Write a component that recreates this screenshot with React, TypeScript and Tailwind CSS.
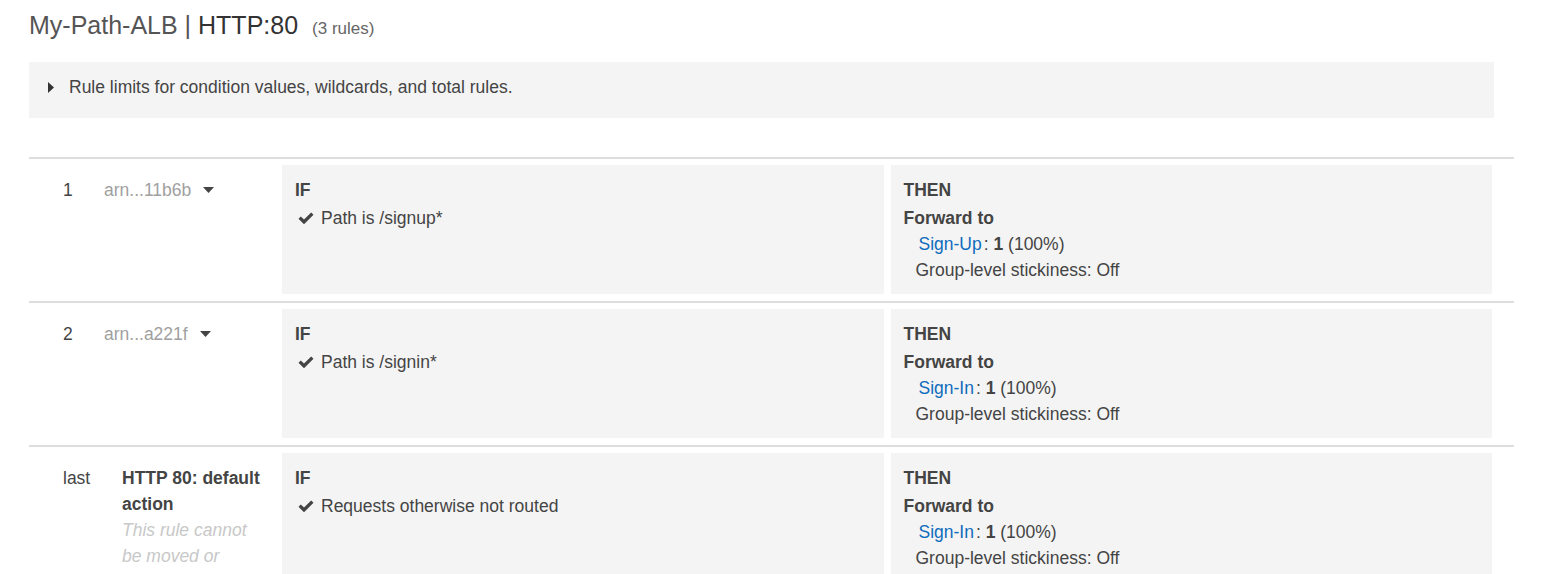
type Rule = {
  num: string;
  arn?: string;
  cond: string;
  target: string;
};

const rules: Rule[] = [
  { num: "1", arn: "arn...11b6b", cond: "Path is /signup*", target: "Sign-Up" },
  { num: "2", arn: "arn...a221f", cond: "Path is /signin*", target: "Sign-In" },
  { num: "last", cond: "Requests otherwise not routed", target: "Sign-In" },
];

const CaretDown = () => (
  <svg width="11" height="6" viewBox="0 0 11 6" className="ml-[12px]">
    <path d="M0 0 L11 0 L5.5 6 Z" fill="#444" />
  </svg>
);

const CaretRight = () => (
  <svg width="6" height="11" viewBox="0 0 6 11">
    <path d="M0 0 L6 5.5 L0 11 Z" fill="#333" />
  </svg>
);

// chunky "ok" check like the glyphicon one
const OkCheck = () => (
  <svg width="16" height="13" viewBox="0 0 16 13">
    <path d="M0.5 6.8 L2.8 4.5 L6 7.6 L13.2 0.5 L15.5 2.8 L6 12.3 Z" fill="#444" />
  </svg>
);

function RuleRow({ rule }: { rule: Rule }) {
  const isLast = rule.num === "last";
  return (
    <div className="border-t-2 border-[#dddddd] flex pt-[6px] pb-[7px] pr-[22px]">
      {/* left column: number + name */}
      <div className="w-[253px] flex leading-[26px] pt-[12px]">
        <div className="w-[75px] pl-[34px] text-[#444]">{rule.num}</div>
        {isLast ? (
          <div className="pl-[18px] w-[160px]">
            <div className="font-bold text-[#444]">HTTP 80: default action</div>
            <div className="italic text-[#c8c8c8] w-[130px]">This rule cannot be moved or deleted.</div>
          </div>
        ) : (
          <div className="flex items-center h-[26px] text-[#a0a0a0]">
            {rule.arn}
            <CaretDown />
          </div>
        )}
      </div>

      <div className="flex-1 flex gap-[7px]">
        <div className="flex-1 bg-[#f4f4f4] h-[129px] pt-[12px] pl-[13px] leading-[26px] text-[#444]">
          <div className="font-bold mb-[2px]">IF</div>
          <div className="flex items-center pl-[3px]">
            <OkCheck />
            <span className="ml-[7px]">{rule.cond}</span>
          </div>
        </div>
        <div className="flex-1 bg-[#f4f4f4] h-[129px] pt-[12px] pl-[13px] leading-[26px] text-[#444]">
          <div className="font-bold mb-[2px]">THEN</div>
          <div className="font-bold">Forward to</div>
          <div className="pl-[15px]">
            <span className="text-[#0f6cbd]">{rule.target}</span>
            <span className="ml-[2px]">: </span>
            <span className="font-bold">1</span> (100%)
          </div>
          <div className="pl-[12px]">Group-level stickiness: Off</div>
        </div>
      </div>
    </div>
  );
}

export default function App() {
  return (
    <div className="bg-white min-h-screen font-['Liberation_Sans',Arial,sans-serif] text-[17.5px] pl-[29px] pr-[46px] pt-[11px]">
      <div className="flex items-baseline leading-[28px]">
        <span className="text-[25px] text-[#555]">
          My-Path-ALB | <span className="text-[#333]">HTTP:80</span>
        </span>
        <span className="text-[17px] text-[#666] ml-[14px]">(3 rules)</span>
      </div>

      <div className="mt-[19px] mr-[20px] h-[56px] bg-[#f4f4f4] flex items-start pt-[12px] leading-[26px] pl-[19px] text-[#444]">
        <div className="h-[26px] flex items-center">
          <CaretRight />
        </div>
        <span className="ml-[15px]">Rule limits for condition values, wildcards, and total rules.</span>
      </div>

      <div className="mt-[39px]">
        {rules.map((r) => (
          <RuleRow key={r.num} rule={r} />
        ))}
      </div>
    </div>
  );
}
